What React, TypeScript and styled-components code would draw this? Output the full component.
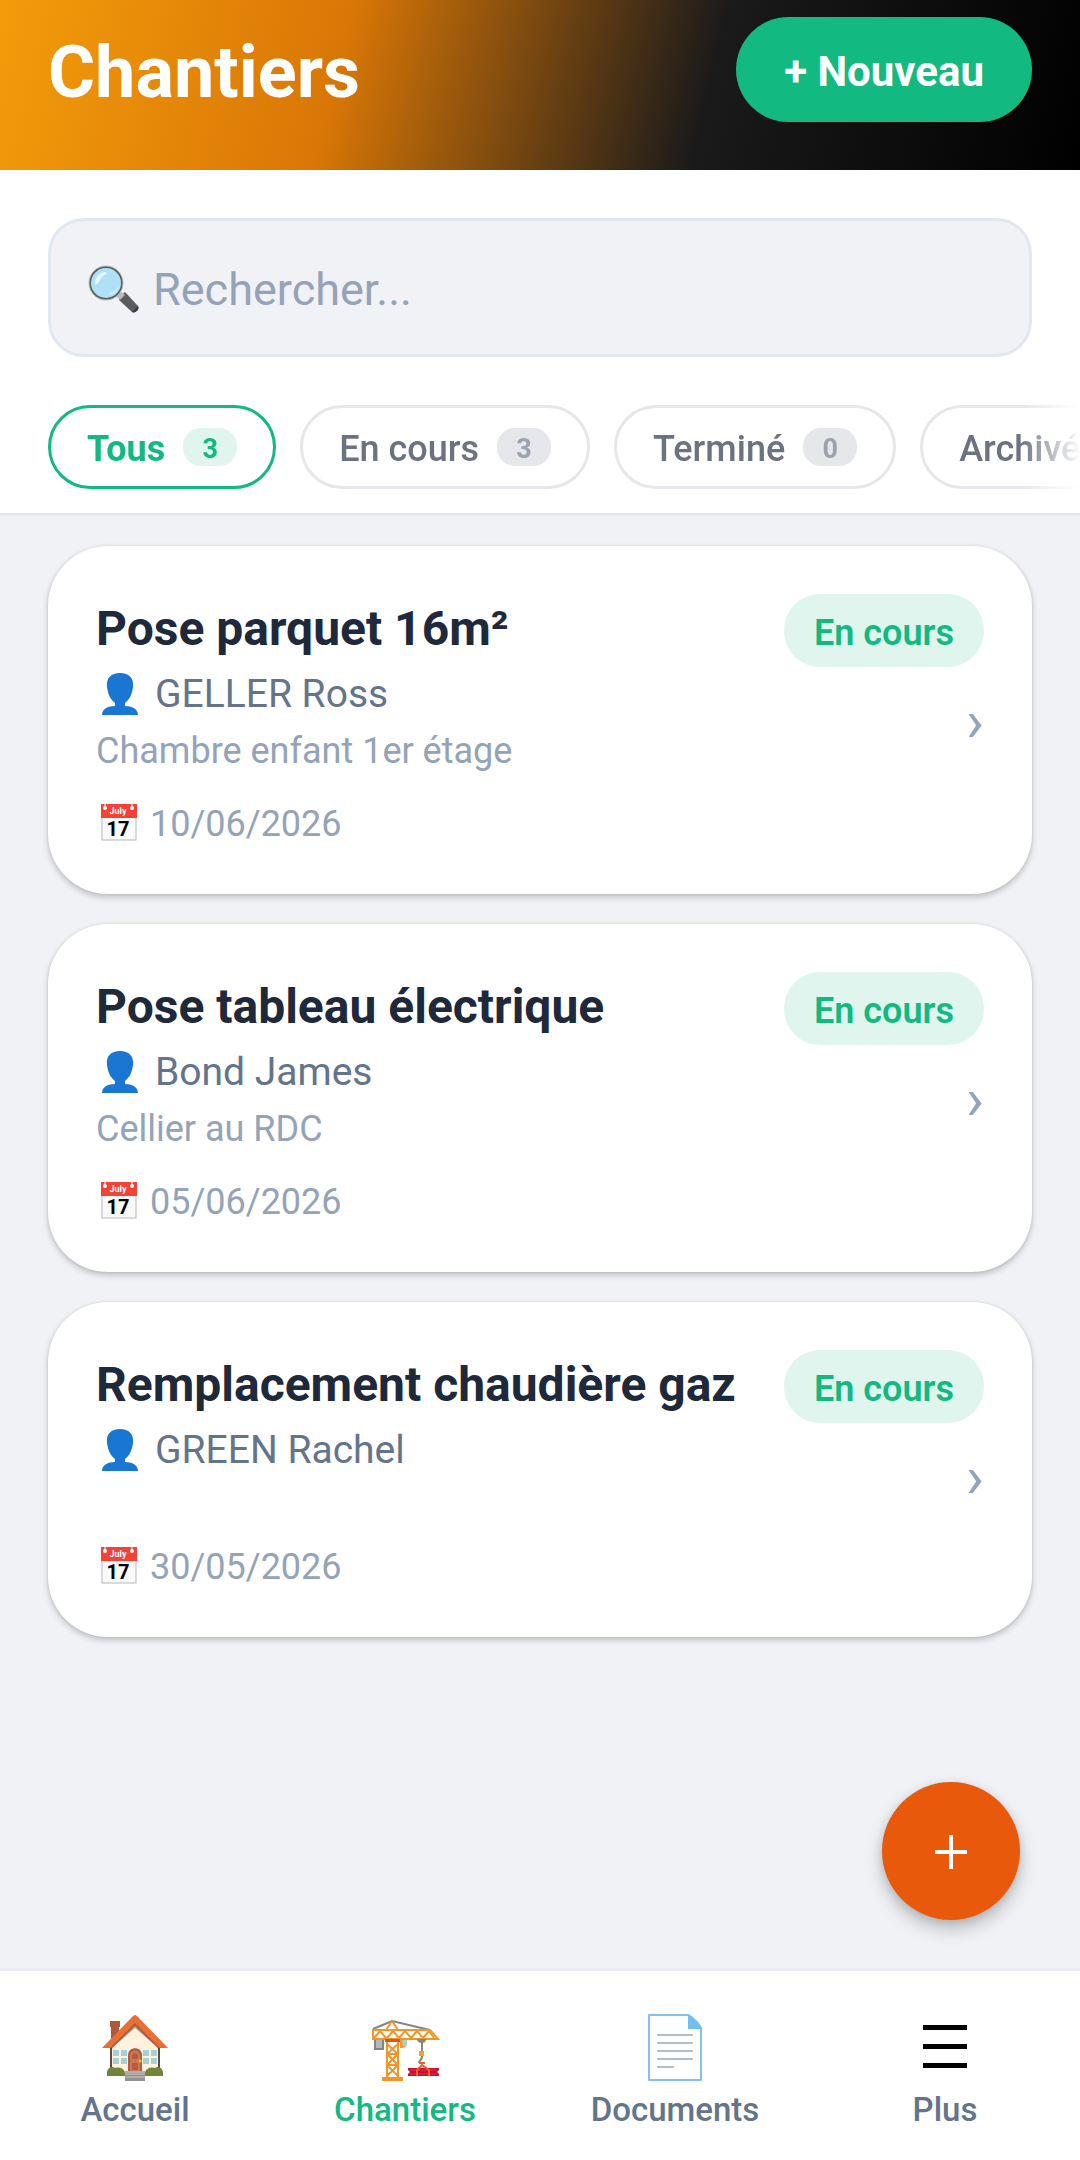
import React, { useState } from 'react';
import styled, { createGlobalStyle } from 'styled-components';

const color = {
  green: '#12b981',
  greenSoft: '#e0f5ed',
  ink: '#1e293b',
  slate: '#64748b',
  muted: '#94a3b8',
  line: '#e2e8f0',
  chipLine: '#e5e7eb',
  chipText: '#6b7280',
  page: '#f0f2f6',
  orange: '#e8590c',
};

const GlobalStyle = createGlobalStyle`
  *, *::before, *::after { box-sizing: border-box; }
  body {
    margin: 0;
    background: ${color.page};
    font-family: Roboto, "Noto Sans", sans-serif;
    color: ${color.ink};
  }
  h1, h2, p, ul { margin: 0; padding: 0; }
  ul { list-style: none; }
  button, input { font-family: inherit; }
  button { cursor: pointer; border: 0; }
  svg { display: block; flex: none; }
`;

const Screen = styled.div`
  display: flex;
  flex-direction: column;
  min-height: 100vh;
`;

const Header = styled.header`
  display: flex;
  align-items: center;
  justify-content: space-between;
  padding: 17px 48px 48px;
  background: linear-gradient(104deg, #f59e0b 0%, #d97706 33%, #1a1a1a 66%, #000 100%) bottom / 100% 265px;
`;

const PageTitle = styled.h1`
  padding-top: 6px;
  font-size: 72px;
  line-height: 84px;
  font-weight: 700;
  color: #fff;
`;

const NewButton = styled.button`
  height: 105px;
  padding: 4px 48px 0;
  border-radius: 53px;
  background: ${color.green};
  color: #fff;
  font-size: 42px;
  line-height: 50px;
  font-weight: 700;
`;

const Tools = styled.section`
  background: #fff;
  border-bottom: 3px solid ${color.line};
  padding: 48px 0 24px;
`;

const SearchBox = styled.label`
  display: flex;
  align-items: center;
  gap: 12px;
  height: 139px;
  margin: 0 48px 48px;
  padding: 4px 36px 0;
  border: 3px solid ${color.line};
  border-radius: 36px;
  background: ${color.page};
`;

const SearchInput = styled.input`
  flex: 1;
  min-width: 0;
  padding: 0;
  border: 0;
  outline: 0;
  background: transparent;
  color: ${color.ink};
  font-size: 45px;
  line-height: 54px;
  &::placeholder { color: ${color.muted}; opacity: 1; }
`;

const Chips = styled.div`
  display: flex;
  gap: 24px;
  padding-left: 48px;
  overflow-x: auto;
  scrollbar-width: none;
  mask-image: linear-gradient(to left, transparent 0, #000 60px);
`;

const Chip = styled.button<{ $active: boolean }>`
  display: flex;
  flex: none;
  align-items: center;
  gap: 18px;
  height: 84px;
  padding: 0 36px;
  border: 3px solid ${(p) => (p.$active ? color.green : color.chipLine)};
  border-radius: 42px;
  background: #fff;
  color: ${(p) => (p.$active ? color.green : color.chipText)};
  font-size: 36px;
  line-height: 42px;
  font-weight: ${(p) => (p.$active ? 700 : 500)};
`;

const ChipLabel = styled.span`
  padding-top: 4px;
`;

const Count = styled.span<{ $active: boolean }>`
  min-width: 54px;
  padding-top: 4px;
  border-radius: 18px;
  background: ${(p) => (p.$active ? color.greenSoft : color.chipLine)};
  color: ${(p) => (p.$active ? color.green : '#9ca3af')};
  font-size: 27px;
  line-height: 34px;
  font-weight: 700;
  text-align: center;
`;

const List = styled.ul`
  display: flex;
  flex: 1;
  flex-direction: column;
  gap: 30px;
  padding: 30px 48px;
`;

const Card = styled.li`
  display: flex;
  justify-content: space-between;
  gap: 24px;
  padding: 48px;
  border-radius: 60px;
  background: #fff;
  box-shadow: 0 3px 6px rgba(0, 0, 0, 0.22), 0 0 3px rgba(0, 0, 0, 0.08);
`;

const Details = styled.div`
  min-width: 0;
`;

const Aside = styled.div`
  display: flex;
  flex: none;
  flex-direction: column;
  align-items: flex-end;
  gap: 18px;
`;

const CardTitle = styled.h2`
  padding-top: 2px;
  font-size: 48px;
  line-height: 66px;
  font-weight: 700;
`;

const Client = styled.p`
  display: flex;
  align-items: center;
  gap: 10px;
  color: ${color.slate};
  font-size: 39px;
  line-height: 64px;
`;

const Description = styled.p`
  min-height: 37px;
  color: ${color.muted};
  font-size: 36px;
  line-height: 50px;
`;

const DateLine = styled.p`
  display: flex;
  align-items: center;
  gap: 9px;
  margin-top: 26px;
  color: ${color.muted};
  font-size: 36px;
  line-height: 44px;
`;

const Status = styled.span`
  padding: 5px 30px 0;
  border-radius: 36px;
  background: ${color.greenSoft};
  color: ${color.green};
  font-size: 36px;
  line-height: 68px;
  font-weight: 600;
`;

const Chevron = styled.span`
  color: ${color.muted};
  font-size: 60px;
  line-height: 72px;
`;

const BottomArea = styled.div`
  position: sticky;
  bottom: 0;
`;

const Fab = styled.button`
  position: absolute;
  right: 60px;
  bottom: calc(100% + 48px);
  display: grid;
  place-items: center;
  width: 138px;
  height: 138px;
  padding: 0;
  border-radius: 50%;
  background: ${color.orange};
  box-shadow: 0 9px 18px rgba(0, 0, 0, 0.22), 0 2px 8px rgba(0, 0, 0, 0.1);
`;

const Nav = styled.nav`
  display: grid;
  grid-template-columns: repeat(4, 1fr);
  padding: 40px 0 30px;
  border-top: 3px solid #e9ebf0;
  background: #fff;
`;

const NavLink = styled.a<{ $active: boolean }>`
  display: flex;
  flex-direction: column;
  align-items: center;
  gap: 3px;
  color: ${(p) => (p.$active ? color.green : color.slate)};
  font-size: 33px;
  line-height: 40px;
  font-weight: 500;
  text-decoration: none;
`;

function MagnifierIcon() {
  return (
    <svg width="54" height="54" viewBox="0 0 54 54" aria-hidden="true">
      <path d="M32 34l6-5 13 14c2 3-3 8-6 6L32 37z" fill="#5b5b5b" />
      <path d="M45 49l6-6c2 3-3 8-6 6z" fill="#3c3c3c" />
      <path d="M30 32l4-3 4 3-5 5-3-3z" fill="#b9bcbd" />
      <circle cx="19" cy="20" r="16" fill="#aee0f7" stroke="#5a5d5e" strokeWidth="2" />
      <circle cx="19" cy="20" r="17" fill="none" stroke="#b8bbbc" strokeWidth="1" />
      <path d="M8 19c1-6 5-10 11-10 2 2-2 3-4 5s-3 6-6 8c-1 0-1-2-1-3z" fill="#e6f6fd" />
      <path d="M23 32c5-1 8-5 9-9-3 4-6 6-10 7z" fill="#d4effb" />
    </svg>
  );
}

function PersonIcon() {
  return (
    <svg width="49" height="48" viewBox="0 0 49 48" aria-hidden="true">
      <path
        d="M24 3c9 0 14 5 13 14-1 8-4 13-8 16v3c7 0 13 3 13 9H6c0-6 6-9 13-9v-3c-4-3-7-8-8-16C10 8 15 3 24 3z"
        fill="#1976d2"
      />
    </svg>
  );
}

function CalendarIcon() {
  return (
    <svg width="45" height="42" viewBox="0 3 45 42" aria-hidden="true">
      <rect x="6" y="5" width="34" height="35" fill="#fafafa" stroke="#b8b8b8" strokeWidth="1" />
      <rect x="5" y="4" width="36" height="14" fill="#f44336" />
      <path d="M9 4v4M36 4v4" stroke="#fff" strokeWidth="1" />
      <circle cx="9" cy="8" r="2" fill="#fff" />
      <circle cx="36" cy="8" r="2" fill="#fff" />
      <text x="22" y="14" fontSize="9" fontWeight="700" fill="#fff" textAnchor="middle">July</text>
      <text x="22" y="36" fontSize="20" fontWeight="700" fill="#000" textAnchor="middle">17</text>
    </svg>
  );
}

function HouseIcon() {
  return (
    <svg width="76" height="76" viewBox="0 0 76 76" aria-hidden="true">
      <path d="M13 10h10v6h-1v18h-8V16h-1z" fill="#ad5a38" />
      <path d="M38 10l25 26v25H13V36z" fill="#fff3e0" />
      <path d="M13 36h2v22h-2zM61 36h2v22h-2z" fill="#5d4a43" />
      <path d="M38 11L10 37h5l23-20 23 20h5z" fill="#b8a391" />
      <path d="M38 7L12 37h3l23-22 23 22h3z" fill="#ad5a38" />
      <path d="M38 4c1 0 2 1 3 2l30 31h-8L38 12 13 37H5L35 6c1-1 2-2 3-2z" fill="#e96f37" />
      <g fill="#a8d0d5">
        <path d="M16 39h6v6h-6zM24 39h6v6h-6zM16 47h6v6h-6zM24 47h6v6h-6zM46 39h6v6h-6zM54 39h6v6h-6zM46 47h6v6h-6zM54 47h6v6h-6z" />
      </g>
      <path d="M31 61V44c0-9 14-9 14 0v17z" fill="#b35c40" />
      <path d="M33 61V45c0-7 10-7 10 0v16z" fill="#cf7557" />
      <path d="M35 48v-3c0-4 6-4 6 0v3zM35 52h6v7h-6z" fill="#b35c40" />
      <circle cx="43" cy="50" r="1.5" fill="#fbc02d" />
      <path d="M10 65v-3c0-6 6-7 8-5 2-1 9-1 10 5v3zM48 65v-3c1-6 8-6 10-5 2-2 8-1 8 5v3z" fill="#72843a" />
      <path d="M28 60h20v10H28z" fill="#adadad" />
      <path d="M28 64h20v1H28zM28 67h20v3H28z" fill="#929292" />
    </svg>
  );
}

function CraneIcon() {
  return (
    <svg width="76" height="76" viewBox="0 0 76 76" aria-hidden="true" fill="none">
      <path d="M6 18L25 10l38 9" stroke="#858585" strokeWidth="2" />
      <path d="M8 28h8v10H8z" fill="#b8b8b8" stroke="#858585" strokeWidth="2" />
      <path d="M33 28h7v3c0 5-3 6-7 6z" fill="#f29a2e" />
      <path d="M35 29h5v6h-4z" fill="#a8cfd2" />
      <g stroke="#f19627" strokeWidth="2">
        <path d="M6 19h57l8 9H6zM19 19l6-9 6 9M20 28v38M31 28v38" />
        <path d="M7 27l6-7 6 7M20 27l6-7 6 7M32 27l6-7 6 7 6-7 6 7 6-7 5 7" />
        <path d="M20 33l11 10M31 33L20 43M20 43l11 11M31 43L20 54M20 54l11 11M31 54L20 65M20 43h11M20 54h11" />
      </g>
      <path d="M18 28h15v3H18z" fill="#dd5518" />
      <path d="M15 66h21v4H15z" fill="#f19627" />
      <path d="M50 28h9c0 3-2 4-4 4s-5-1-5-4z" fill="#858585" />
      <path d="M55 31v15c0 3-3 3-3 6" stroke="#858585" strokeWidth="2" />
      <path d="M52 40h5v5h-5z" fill="#f6a21d" />
      <path d="M41 57h31v2l-2 2 2 2v2H41v-2l2-2-2-2z" fill="#c90f2c" />
      <path d="M43 59h27M43 63h27" stroke="#dc3048" strokeWidth="1" />
      <path d="M50 65v-6l5-5 7 5v6M52 52h6" stroke="#fb5a22" strokeWidth="2" />
    </svg>
  );
}

function DocumentIcon() {
  return (
    <svg width="76" height="76" viewBox="0 0 76 76" aria-hidden="true" fill="none">
      <path d="M12 4h39l13 13v52H12z" fill="#fff" stroke="#82c3ec" strokeWidth="2" strokeLinejoin="round" />
      <path d="M51 3c2 0 14 10 14 15H51z" fill="#72bff0" />
      <path d="M21 24h34M21 32h34M21 40h34M21 48h34M21 56h15" stroke="#b0bec5" strokeWidth="2" strokeLinecap="round" />
    </svg>
  );
}

function MenuIcon() {
  return (
    <svg width="76" height="76" viewBox="0 0 76 76" aria-hidden="true">
      <path d="M16 14h44v5H16zM16 33h44v5H16zM16 52h44v5H16z" fill="#000" />
    </svg>
  );
}

const filters = [
  { label: 'Tous', count: 3 },
  { label: 'En cours', count: 3 },
  { label: 'Terminé', count: 0 },
  { label: 'Archivé', count: 0 },
];

const sites = [
  { title: 'Pose parquet 16m²', client: 'GELLER Ross', description: 'Chambre enfant 1er étage', date: '10/06/2026' },
  { title: 'Pose tableau électrique', client: 'Bond James', description: 'Cellier au RDC', date: '05/06/2026' },
  { title: 'Remplacement chaudière gaz', client: 'GREEN Rachel', description: '', date: '30/05/2026' },
];

const tabs = [
  { label: 'Accueil', Icon: HouseIcon },
  { label: 'Chantiers', Icon: CraneIcon },
  { label: 'Documents', Icon: DocumentIcon },
  { label: 'Plus', Icon: MenuIcon },
];

export default function App() {
  const [filter, setFilter] = useState('Tous');

  return (
    <Screen>
      <GlobalStyle />
      <Header>
        <PageTitle>Chantiers</PageTitle>
        <NewButton type="button">+ Nouveau</NewButton>
      </Header>
      <Tools>
        <SearchBox>
          <MagnifierIcon />
          <SearchInput type="text" placeholder="Rechercher..." aria-label="Rechercher" />
        </SearchBox>
        <Chips>
          {filters.map(({ label, count }) => {
            const active = label === filter;
            return (
              <Chip key={label} type="button" $active={active} aria-pressed={active} onClick={() => setFilter(label)}>
                <ChipLabel>{label}</ChipLabel>
                <Count $active={active}>{count}</Count>
              </Chip>
            );
          })}
        </Chips>
      </Tools>
      <List>
        {sites.map((site) => (
          <Card key={site.title}>
            <Details>
              <CardTitle>{site.title}</CardTitle>
              <Client>
                <PersonIcon />
                {site.client}
              </Client>
              <Description>{site.description}</Description>
              <DateLine>
                <CalendarIcon />
                {site.date}
              </DateLine>
            </Details>
            <Aside>
              <Status>En cours</Status>
              <Chevron aria-hidden="true">›</Chevron>
            </Aside>
          </Card>
        ))}
      </List>
      <BottomArea>
        <Fab type="button" aria-label="Ajouter un chantier">
          <svg width="36" height="36" viewBox="0 0 36 36" aria-hidden="true">
            <path d="M2 19h32M18 2v34" stroke="#fff" strokeWidth="4" />
          </svg>
        </Fab>
        <Nav>
          {tabs.map(({ label, Icon }) => (
            <NavLink key={label} href={`#${label.toLowerCase()}`} $active={label === 'Chantiers'}>
              <Icon />
              {label}
            </NavLink>
          ))}
        </Nav>
      </BottomArea>
    </Screen>
  );
}
